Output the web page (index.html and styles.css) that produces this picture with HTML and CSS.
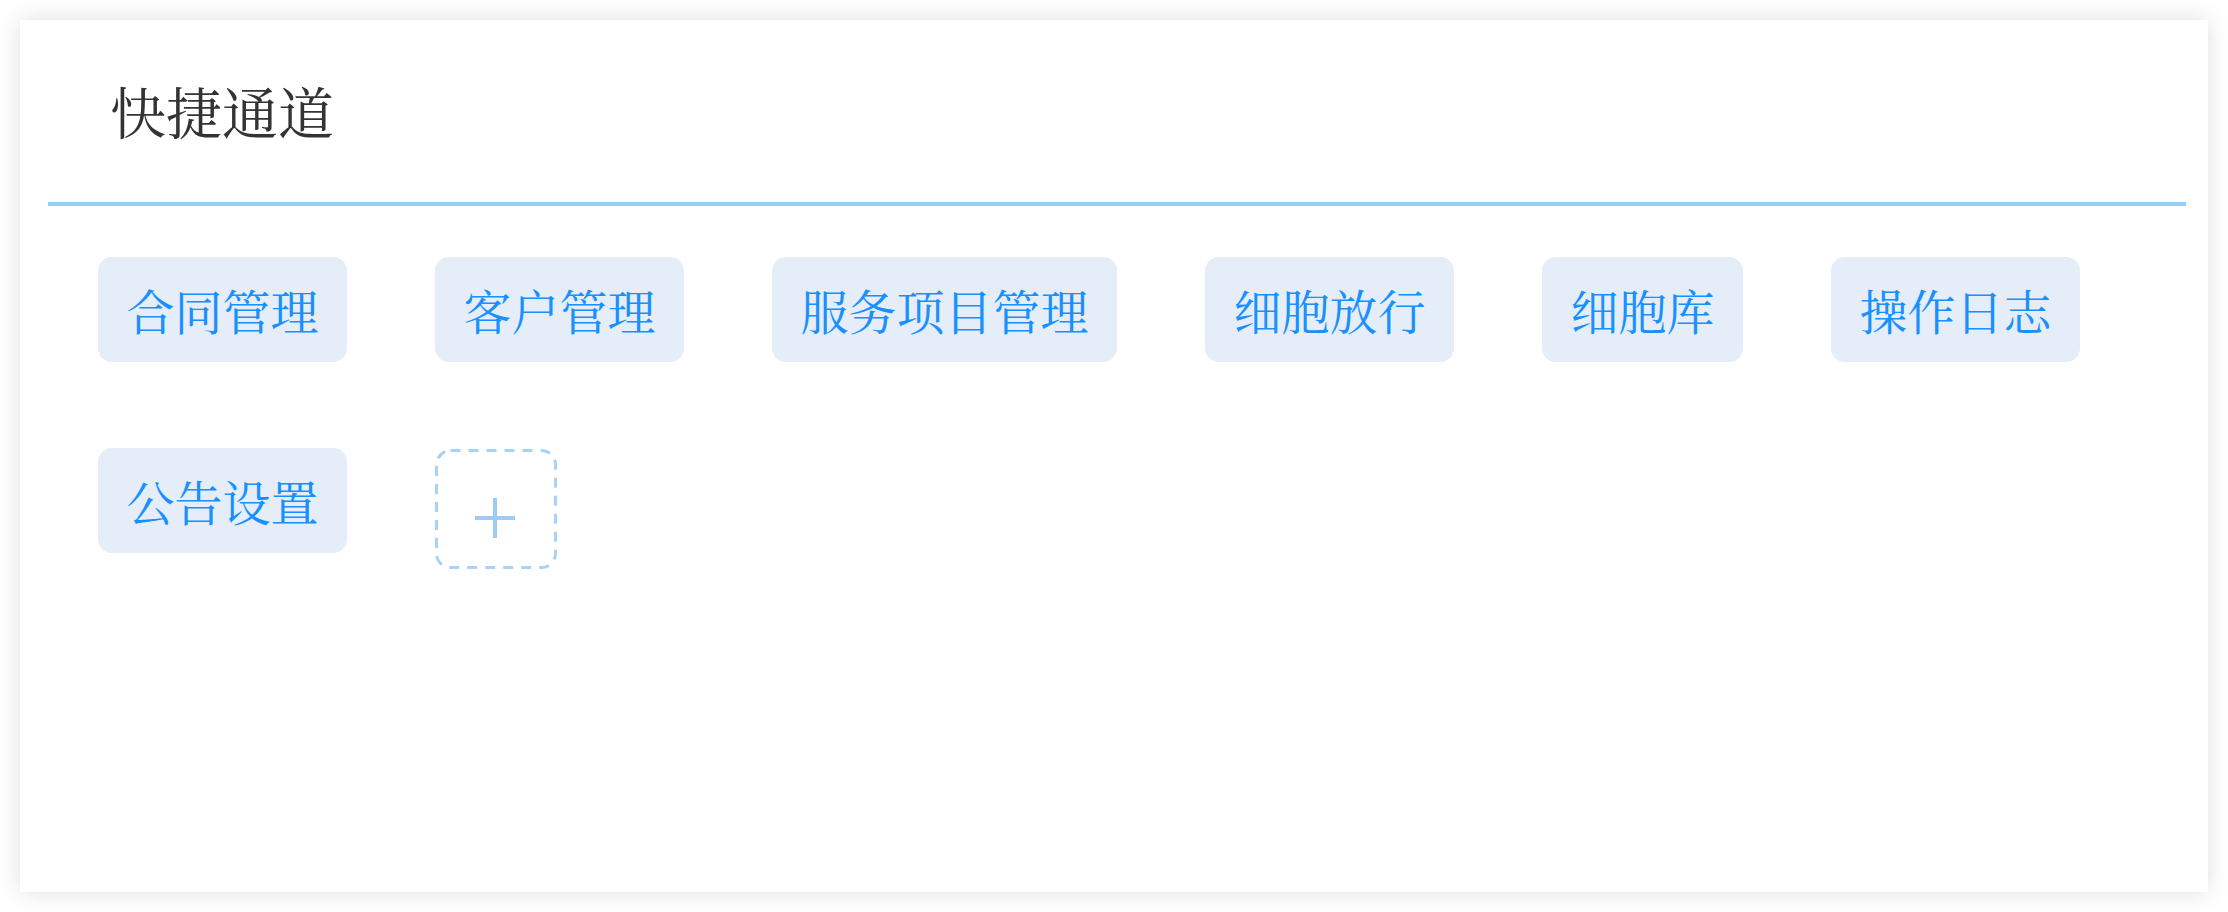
FILE: index.html
```html
<!DOCTYPE html>
<html lang="zh-CN">
<head>
    <meta charset="UTF-8">
    <meta name="viewport" content="width=device-width, initial-scale=1.0">
    <title>快捷通道</title>

    <link rel="stylesheet" href="styles.css">
</head>
<body>

    <div class="card">
        <div class="card-header">
            <h2>快捷通道</h2>
        </div>

        <!-- 快捷入口列表 -->
        <div class="shortcut-list">
            <a class="shortcut">合同管理</a>
            <a class="shortcut">客户管理</a>
            <a class="shortcut">服务项目管理</a>
            <a class="shortcut">细胞放行</a>
            <a class="shortcut">细胞库</a>
            <a class="shortcut">操作日志</a>
            <a class="shortcut">公告设置</a>
            <button class="add-btn" title="添加">
                <svg width="122" height="120" viewBox="0 0 122 120">
                    <rect x="1.5" y="1.5" width="119" height="117" rx="14" ry="14"
                          fill="none" stroke="#a9d3f6" stroke-width="3" stroke-dasharray="10 8"/>
                    <path d="M40 69 H80 M60 49 V89" stroke="#9ccbf3" stroke-width="4" fill="none"/>
                </svg>
            </button>
        </div>
    </div>

</body>
</html>
```

FILE: styles.css
```css
body {
    background-color: #fff;
    margin: 0;
    padding: 20px;
    font-family: "Noto Serif CJK SC", "Noto Sans CJK SC", serif;
}

.card {
    background: #fff;
    width: 2188px;
    height: 872px;
    box-shadow: 0 0 22px rgba(0, 0, 0, 0.13);
}

.card-header {
    margin: 0 22px 0 28px;
    padding: 62px 0 0 62px;
    height: 120px;
    border-bottom: 4px solid #94d0f8;
}

.card-header h2 {
    margin: 0;
    font-size: 56px;
    line-height: 56px;
    font-weight: normal;
    color: #333;
}

.shortcut-list {
    display: flex;
    flex-wrap: wrap;
    align-items: flex-start;
    padding: 51px 0 0 78px;
}

.shortcut {
    display: block;
    height: 105px;
    line-height: 105px;
    padding: 0 28.5px;
    margin: 0 88px 86px 0;
    background: #e4edf8;
    color: #1890ff;
    font-size: 48px;
    border-radius: 14px;
    cursor: pointer;
}

.add-btn {
    display: block;
    width: 122px;
    height: 120px;
    padding: 0;
    margin-top: 1px;
    border: none;
    background: none;
    cursor: pointer;
}

.add-btn svg {
    display: block;
}
```
